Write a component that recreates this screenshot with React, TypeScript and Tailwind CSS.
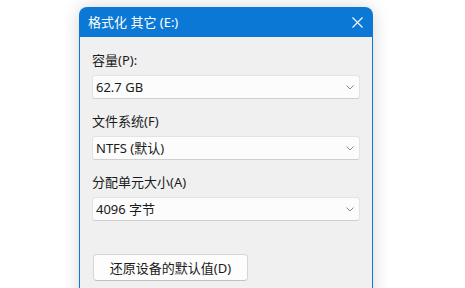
export default function App() {
  const font = { fontFamily: '"Noto Sans", "Noto Sans CJK SC", sans-serif' }

  const Chevron = () => (
    <svg width="8" height="5" viewBox="0 0 8 5" className="shrink-0">
      <path d="M0.5 0.5 L4 4 L7.5 0.5" fill="none" stroke="#8a8a8a" strokeWidth="1" />
    </svg>
  )

  const Combo = ({ value }: { value: string }) => (
    <div className="flex h-[24px] w-[268px] items-center justify-between rounded-[3px] border border-[#e3e3e3] border-b-[#cfcfcf] bg-[#fcfcfc] pl-[3px] pr-[5px] text-[13px] leading-[18px] text-[#1a1a1a]">
      <span>{value}</span>
      <Chevron />
    </div>
  )

  return (
    <div className="relative h-[288px] w-[465px] overflow-hidden bg-white" style={font}>
      <div className="ml-[79px] mt-[7px] w-[294px] rounded-t-lg shadow-[0_0_18px_rgba(0,0,0,0.16)]">
        <div className="flex h-[30px] items-center justify-between rounded-t-lg bg-[#0a78d4] pl-[9px] pr-[10px] text-white">
          <span className="text-[13px] leading-[18px]">格式化 其它 (E:)</span>
          <svg width="11" height="11" viewBox="0 0 11 11">
            <path d="M0.5 0.5 L10.5 10.5 M10.5 0.5 L0.5 10.5" stroke="white" strokeWidth="1.1" />
          </svg>
        </div>
        <div className="flex h-[280px] flex-col border-x border-[#0a78d4] bg-[#f0f0f0] px-[12px] pt-[14px] text-[13px] leading-[18px] text-[#1a1a1a]">
          <div className="mb-[6px]">容量(P):</div>
          <Combo value="62.7 GB" />
          <div className="mb-[6px] mt-[13px]">文件系统(F)</div>
          <Combo value="NTFS (默认)" />
          <div className="mb-[6px] mt-[13px]">分配单元大小(A)</div>
          <Combo value="4096 字节" />
          <button className="ml-[1px] mt-[33px] flex h-[27px] w-[155px] items-center justify-center rounded-[4px] border border-[#d6d6d6] border-b-[#c2c2c2] bg-[#fdfdfd] text-[13px] text-[#1a1a1a]">
            还原设备的默认值(D)
          </button>
        </div>
      </div>
    </div>
  )
}
